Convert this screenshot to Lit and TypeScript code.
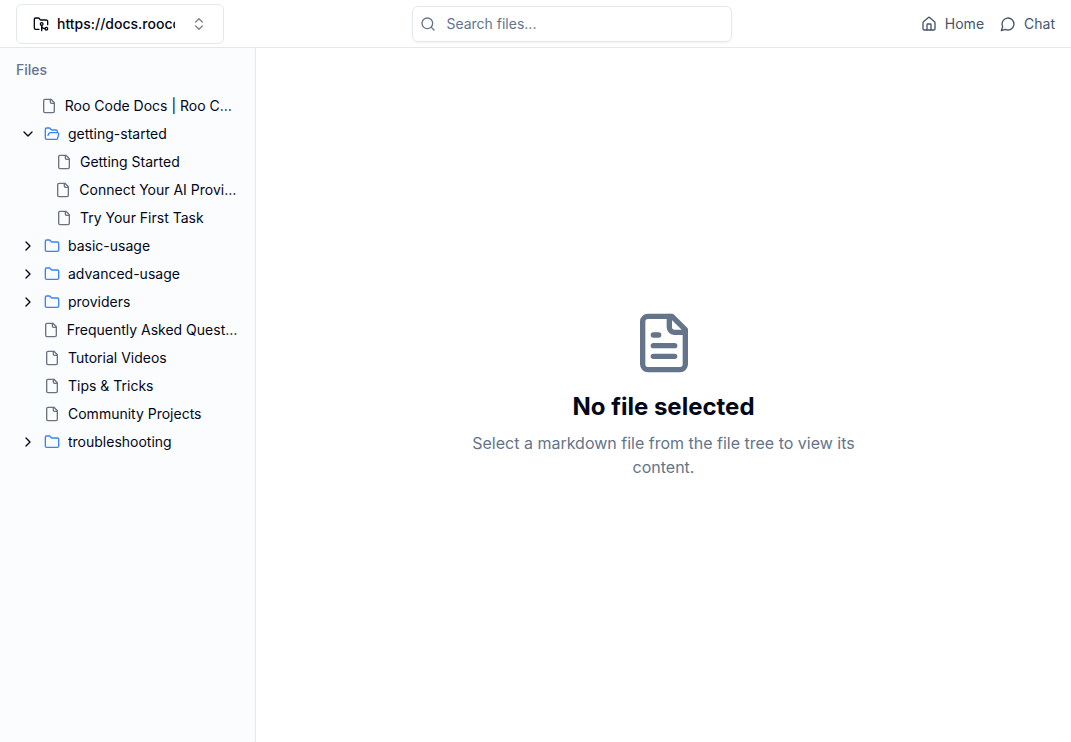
import { LitElement, html, svg, css, nothing, type TemplateResult } from "lit";
import { customElement, property, state } from "lit/decorators.js";

const FOLDER_BODY =
  "M20 20a2 2 0 0 0 2-2V8a2 2 0 0 0-2-2h-7.9a2 2 0 0 1-1.69-.9L9.6 3.9A2 2 0 0 0 7.93 3H4a2 2 0 0 0-2 2v13a2 2 0 0 0 2 2Z";
const FILE_BODY = svg`<path d="M15 2H6a2 2 0 0 0-2 2v16a2 2 0 0 0 2 2h12a2 2 0 0 0 2-2V7Z"/><path d="M14 2v4a2 2 0 0 0 2 2h4"/>`;

const ICONS: Record<string, unknown> = {
  file: FILE_BODY,
  fileText: svg`${FILE_BODY}<path d="M10 9H8"/><path d="M16 13H8"/><path d="M16 17H8"/>`,
  folder: svg`<path d=${FOLDER_BODY}/>`,
  folderOpen: svg`<path d="m6 14 1.5-2.9A2 2 0 0 1 9.24 10H20a2 2 0 0 1 1.94 2.5l-1.54 6a2 2 0 0 1-1.95 1.5H4a2 2 0 0 1-2-2V5a2 2 0 0 1 2-2h3.9a2 2 0 0 1 1.69.9l.81 1.2a2 2 0 0 0 1.67.9H18a2 2 0 0 1 2 2v2"/>`,
  folderGit: svg`<path d="M9 20H4a2 2 0 0 1-2-2V5a2 2 0 0 1 2-2h3.9a2 2 0 0 1 1.69.9l.81 1.2a2 2 0 0 0 1.67.9H20a2 2 0 0 1 2 2v5"/><circle cx="13" cy="12" r="2"/><path d="M18 19c-2.8 0-5-2.2-5-5v8"/><circle cx="20" cy="19" r="2"/>`,
  chevronRight: svg`<path d="m9 18 6-6-6-6"/>`,
  chevronDown: svg`<path d="m6 9 6 6 6-6"/>`,
  chevrons: svg`<path d="m7 15 5 5 5-5"/><path d="m7 9 5-5 5 5"/>`,
  search: svg`<circle cx="11" cy="11" r="8"/><path d="m21 21-4.3-4.3"/>`,
  home: svg`<path d="M15 21v-8a1 1 0 0 0-1-1h-4a1 1 0 0 0-1 1v8"/><path d="M3 10a2 2 0 0 1 .709-1.528l7-5.999a2 2 0 0 1 2.582 0l7 5.999A2 2 0 0 1 21 10v9a2 2 0 0 1-2 2H5a2 2 0 0 1-2-2z"/>`,
  chat: svg`<path d="M7.9 20A9 9 0 1 0 4 16.1L2 22Z"/>`,
};

@customElement("line-icon")
class LineIcon extends LitElement {
  @property() name = "file";

  static styles = css`
    :host {
      display: block;
      flex: none;
      width: 16px;
      height: 16px;
    }
    .glyph {
      display: block;
      width: 100%;
      height: 100%;
      fill: none;
      stroke: currentColor;
      stroke-width: 2;
      stroke-linecap: round;
      stroke-linejoin: round;
    }
  `;

  render() {
    return html`<svg class="glyph" viewBox="0 0 24 24" aria-hidden="true">${ICONS[this.name]}</svg>`;
  }
}

interface TreeNode {
  name: string;
  children?: TreeNode[];
}

const TREE: TreeNode[] = [
  { name: "Roo Code Docs | Roo Code Docs" },
  {
    name: "getting-started",
    children: [
      { name: "Getting Started" },
      { name: "Connect Your AI Provider" },
      { name: "Try Your First Task" },
    ],
  },
  { name: "basic-usage", children: [] },
  { name: "advanced-usage", children: [] },
  { name: "providers", children: [] },
  { name: "Frequently Asked Questions" },
  { name: "Tutorial Videos" },
  { name: "Tips & Tricks" },
  { name: "Community Projects" },
  { name: "troubleshooting", children: [] },
];

@customElement("file-tree")
class FileTree extends LitElement {
  @state() private open = new Set(["getting-started"]);

  static styles = css`
    :host {
      display: block;
    }
    .list {
      list-style: none;
      margin: 0;
      padding: 0;
    }
    .nested {
      padding-left: 12px;
    }
    .row {
      display: flex;
      align-items: center;
      gap: 8px;
      box-sizing: border-box;
      width: 100%;
      padding: 4px 0 4px 4px;
      border: 0;
      border-radius: 4px;
      background: none;
      color: #020817;
      font: inherit;
      text-align: left;
      cursor: pointer;
    }
    .row:hover {
      background: #f1f5f9;
    }
    .spacer {
      flex: 0 1 16px;
    }
    .folder {
      color: #3b82f6;
    }
    .file {
      color: #6b7280;
    }
    .label {
      overflow: hidden;
      text-overflow: ellipsis;
      white-space: nowrap;
    }
  `;

  private toggle(name: string) {
    const next = new Set(this.open);
    if (!next.delete(name)) next.add(name);
    this.open = next;
  }

  private renderNode(node: TreeNode): TemplateResult {
    if (!node.children) {
      return html`<li>
        <button class="row" type="button">
          <span class="spacer"></span>
          <line-icon class="file" name="file"></line-icon>
          <span class="label">${node.name}</span>
        </button>
      </li>`;
    }
    const open = this.open.has(node.name);
    return html`<li>
      <button class="row" type="button" aria-expanded=${open} @click=${() => this.toggle(node.name)}>
        <line-icon name=${open ? "chevronDown" : "chevronRight"}></line-icon>
        <line-icon class="folder" name=${open ? "folderOpen" : "folder"}></line-icon>
        <span class="label">${node.name}</span>
      </button>
      ${open
        ? html`<ul class="list nested">${node.children.map((child) => this.renderNode(child))}</ul>`
        : nothing}
    </li>`;
  }

  render() {
    return html`<ul class="list">${TREE.map((node) => this.renderNode(node))}</ul>`;
  }
}

@customElement("app-root")
class AppRoot extends LitElement {
  static styles = css`
    :host {
      display: flex;
      flex-direction: column;
      min-height: 100vh;
      background: #ffffff;
      color: #020817;
      font: 14px/20px Inter, sans-serif;
    }
    .topbar {
      display: flex;
      align-items: center;
      justify-content: space-between;
      box-sizing: border-box;
      height: 48px;
      padding: 0 16px;
      border-bottom: 1px solid #e2e8f0;
    }
    .source {
      display: flex;
      align-items: center;
      gap: 8px;
      box-sizing: border-box;
      width: 208px;
      height: 40px;
      padding: 0 16px;
      border: 1px solid #e2e8f0;
      border-radius: 6px;
      background: #ffffff;
      color: #020817;
      font: inherit;
      font-weight: 500;
      cursor: pointer;
    }
    .source-url {
      flex: 1;
      min-width: 0;
      margin-right: 8px;
      overflow: hidden;
      white-space: nowrap;
      text-align: left;
    }
    .source-arrows {
      opacity: 0.5;
    }
    .search {
      display: flex;
      align-items: center;
      gap: 10px;
      box-sizing: border-box;
      width: 320px;
      height: 36px;
      padding: 0 7px;
      border: 1px solid #e2e8f0;
      border-radius: 6px;
      box-shadow: 0 1px 2px rgba(0, 0, 0, 0.05);
      color: #64748b;
    }
    .search-input {
      flex: 1;
      min-width: 0;
      padding: 0;
      border: 0;
      outline: 0;
      background: none;
      color: #020817;
      font: inherit;
    }
    .search-input::placeholder {
      color: #64748b;
      opacity: 1;
    }
    .nav {
      display: flex;
      gap: 16px;
    }
    .nav-link {
      display: flex;
      align-items: center;
      gap: 8px;
      color: #475569;
      text-decoration: none;
    }
    .body {
      display: flex;
      flex: 1;
    }
    .sidebar {
      box-sizing: border-box;
      flex: none;
      width: 256px;
      padding: 12px 16px;
      border-right: 1px solid #e2e8f0;
      background: #fbfcfe;
    }
    .sidebar-title {
      margin: 0 0 12px;
      color: #64748b;
      font: inherit;
      font-weight: 500;
    }
    .empty {
      display: flex;
      flex: 1;
      flex-direction: column;
      align-items: center;
      justify-content: center;
      text-align: center;
    }
    .empty-icon {
      width: 64px;
      height: 64px;
      color: #64748b;
    }
    .empty-title {
      margin: 16px 0 8px;
      font-size: 24px;
      font-weight: 700;
      line-height: 32px;
    }
    .empty-text {
      max-width: 448px;
      margin: 0;
      color: #64748b;
      font-size: 16px;
      line-height: 24px;
    }
  `;

  render() {
    return html`
      <header class="topbar">
        <button class="source" type="button" aria-haspopup="listbox">
          <line-icon name="folderGit"></line-icon>
          <span class="source-url">https://docs.roocode.com</span>
          <line-icon class="source-arrows" name="chevrons"></line-icon>
        </button>
        <label class="search">
          <line-icon name="search"></line-icon>
          <input class="search-input" type="text" placeholder="Search files..." aria-label="Search files" />
        </label>
        <nav class="nav">
          <a class="nav-link" href="#home"><line-icon name="home"></line-icon>Home</a>
          <a class="nav-link" href="#chat"><line-icon name="chat"></line-icon>Chat</a>
        </nav>
      </header>
      <div class="body">
        <aside class="sidebar">
          <h2 class="sidebar-title">Files</h2>
          <file-tree></file-tree>
        </aside>
        <main class="empty">
          <line-icon class="empty-icon" name="fileText"></line-icon>
          <h1 class="empty-title">No file selected</h1>
          <p class="empty-text">Select a markdown file from the file tree to view its content.</p>
        </main>
      </div>
    `;
  }
}
